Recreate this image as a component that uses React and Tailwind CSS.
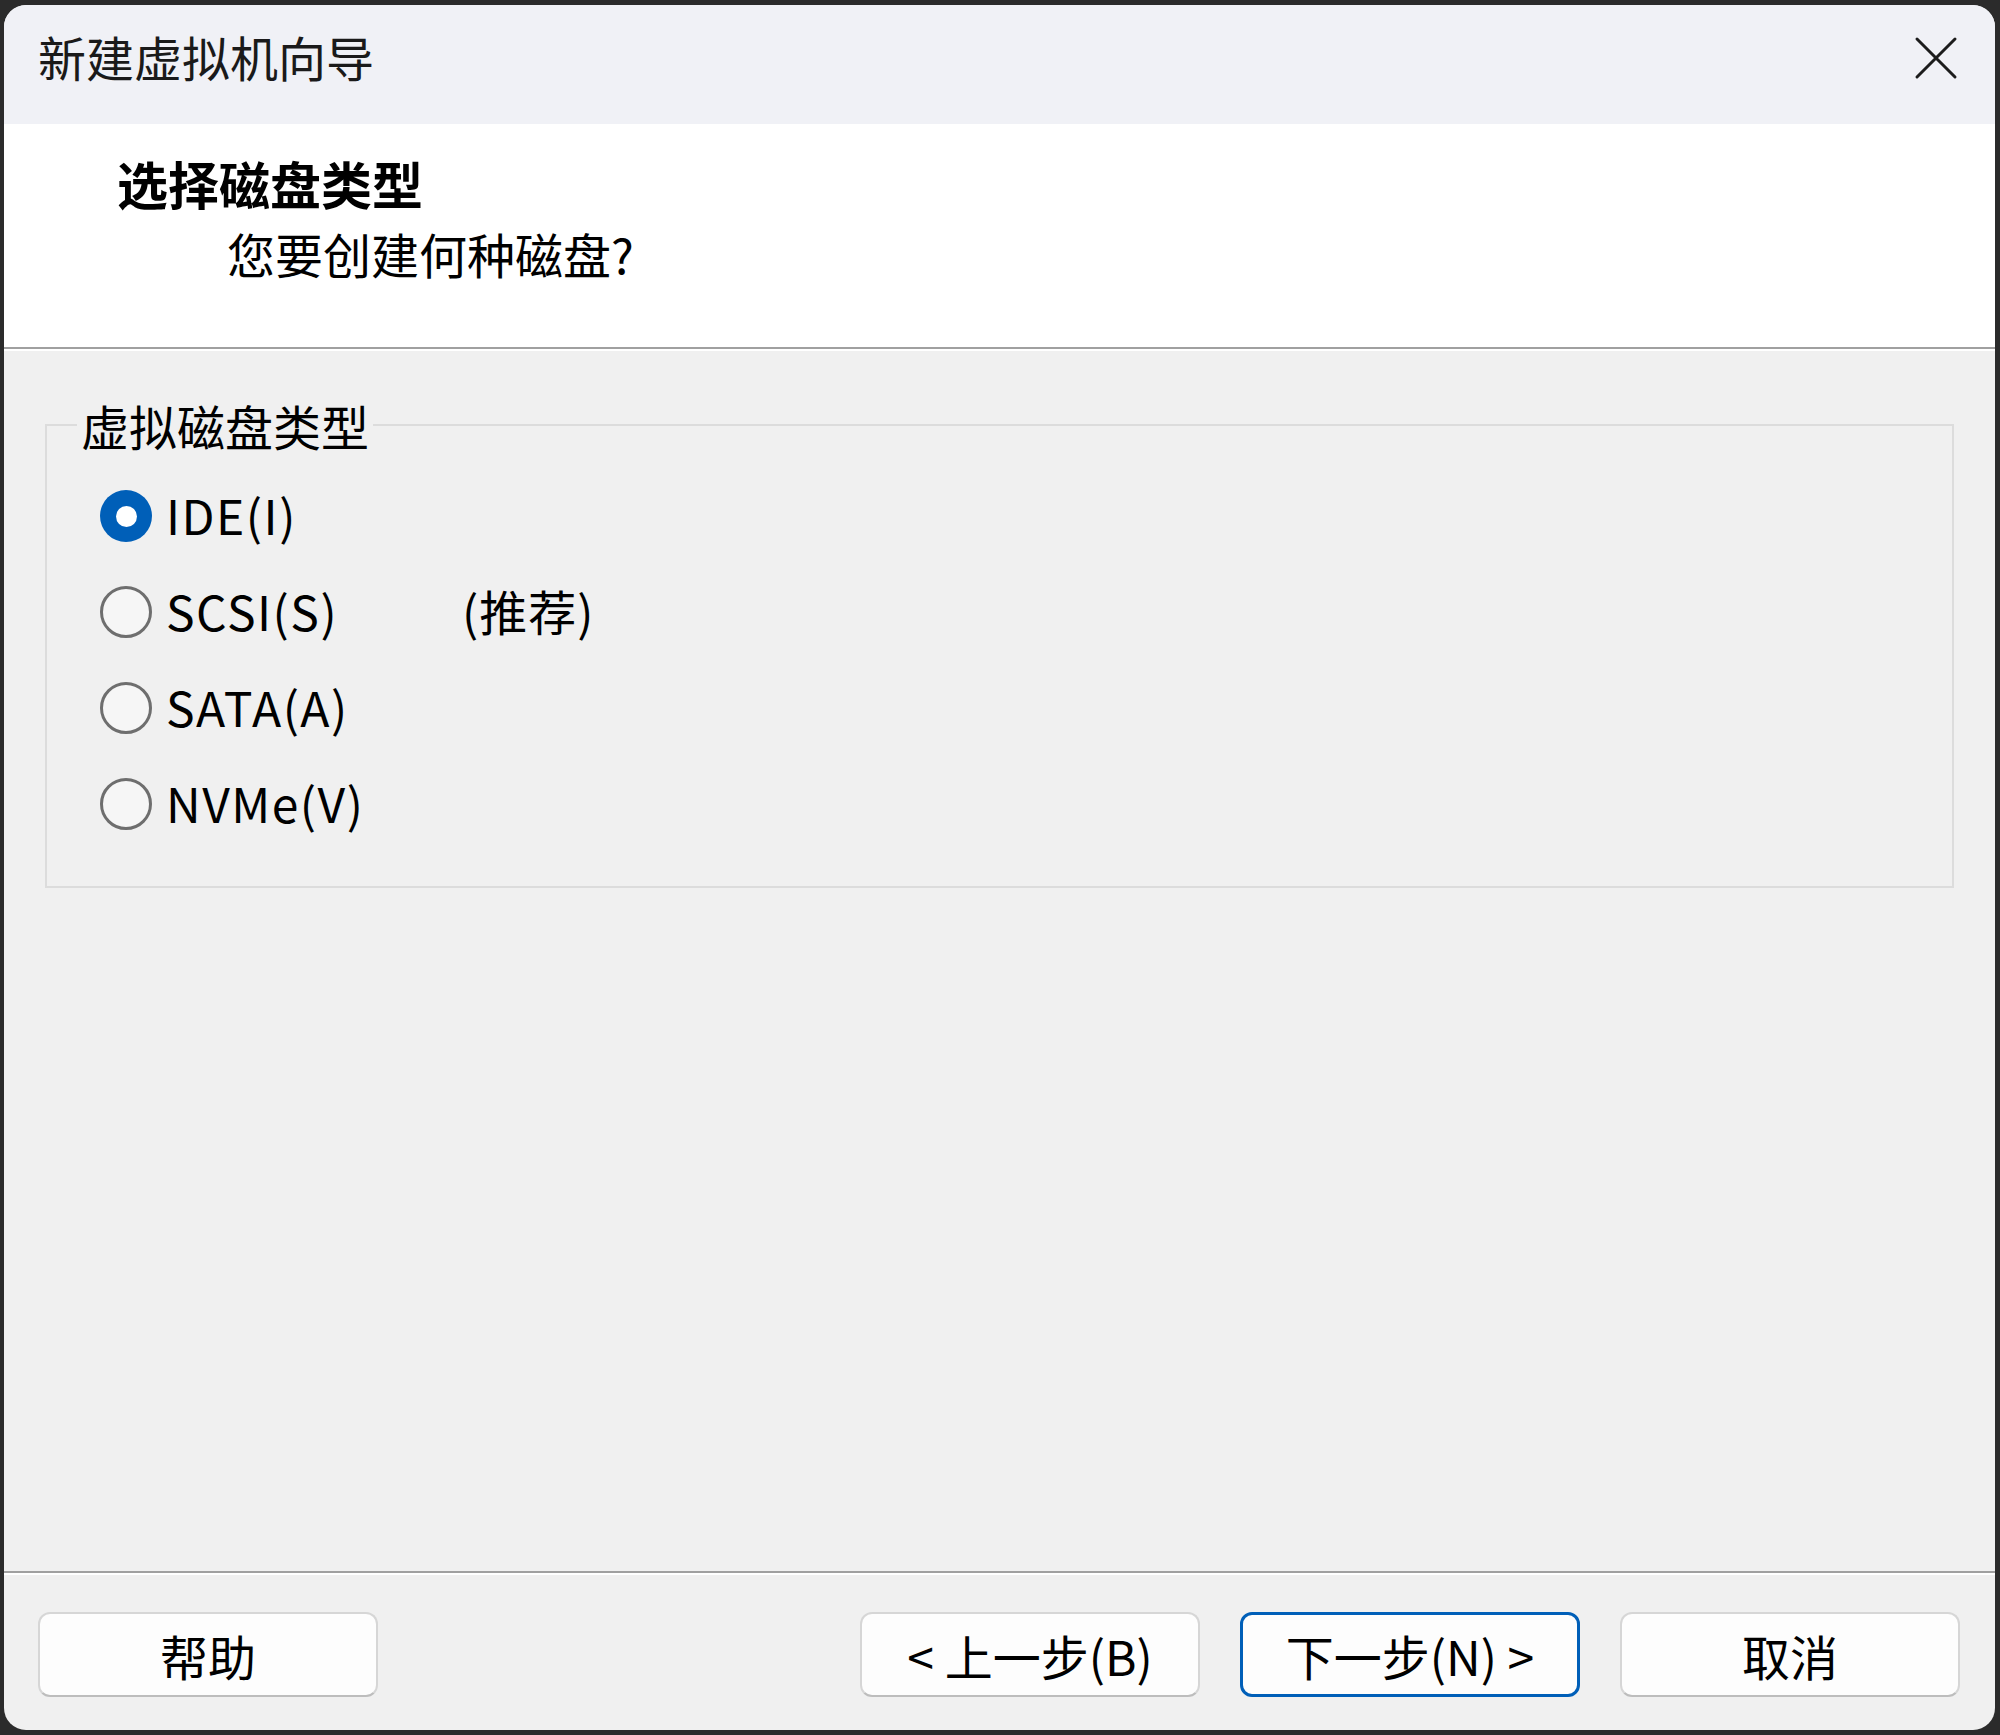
import React from "react";

const Radio = ({ checked, label, note }) => {
    return (
        <div className="h-[96px] flex items-center">
            {checked ? (
                <div className="w-[52px] h-[52px] rounded-full bg-[#005fb8] flex items-center justify-center shrink-0">
                    <div className="w-[21px] h-[21px] rounded-full bg-white" />
                </div>
            ) : (
                <div className="w-[52px] h-[52px] rounded-full border-[3px] border-[#6e6e6e] bg-[#f6f6f6] shrink-0" />
            )}
            <span className="ml-[14px] w-[296px] text-[48px] leading-[48px] tracking-[1.5px] text-black -mt-[4px]">
                {label}
            </span>
            {note && (
                <span className="text-[48px] leading-[48px] tracking-[1px] text-black -mt-[4px]">{note}</span>
            )}
        </div>
    );
};

const Button = ({ children, primary }) => {
    return (
        <button
            type="button"
            className={
                primary
                    ? "h-[85px] w-[340px] rounded-[12px] bg-[#fdfdfd] border-[3px] border-[#005fb8] text-[48px] leading-[48px] text-black flex items-center justify-center"
                    : "h-[85px] w-[340px] rounded-[12px] bg-[#fdfdfd] border-2 border-[#d6d6d6] border-b-[#bdbdbd] text-[48px] leading-[48px] text-black flex items-center justify-center"
            }
        >
            {children}
        </button>
    );
};

export default function App() {
    return (
        <div className="w-[2000px] h-[1735px] bg-[#2b2b2b] pt-[5px] pl-[4px] pr-[5px] pb-[5px] [font-family:'Noto_Sans_CJK_SC',sans-serif]">
            <div className="h-full rounded-[22px] overflow-hidden bg-[#f0f0f0] flex flex-col">
                {/* title bar */}
                <div className="h-[119px] shrink-0 bg-[#f0f1f6] flex items-center justify-between pl-[34px] pr-[37px] pb-[14px]">
                    <span className="text-[48px] leading-[48px] text-[#1a1a1a] -mt-[4px]">新建虚拟机向导</span>
                    <svg width="44" height="44" viewBox="0 0 44 44" fill="none">
                        <path d="M3 3 L41 41 M41 3 L3 41" stroke="#1c1c1c" strokeWidth="3" strokeLinecap="round" />
                    </svg>
                </div>

                {/* header */}
                <div className="h-[223px] shrink-0 bg-white pl-[113px] pt-[34px]">
                    <div className="text-[51px] leading-[51px] font-bold text-black">选择磁盘类型</div>
                    <div className="ml-[110px] mt-[20px] text-[48px] leading-[48px] text-black">
                        您要创建何种磁盘?
                    </div>
                </div>
                <div className="h-[2px] shrink-0 bg-[#a0a0a0]" />
                <div className="h-[2px] shrink-0 bg-white" />

                {/* content */}
                <div className="flex-1 px-[41px] pt-[50px]">
                    <fieldset className="h-[487px] border-2 border-[#dcdcdc]">
                        <legend className="ml-[30px] px-[4px] text-[48px] leading-[48px] text-black">
                            虚拟磁盘类型
                        </legend>
                        <div className="pl-[53px] pt-[19px]">
                            <Radio checked label="IDE(I)" />
                            <Radio label="SCSI(S)" note="(推荐)" />
                            <Radio label="SATA(A)" />
                            <Radio label="NVMe(V)" />
                        </div>
                    </fieldset>
                </div>

                <div className="h-[2px] shrink-0 bg-[#a0a0a0]" />
                <div className="h-[2px] shrink-0 bg-white" />

                {/* footer */}
                <div className="h-[155px] shrink-0 flex justify-between pl-[34px] pr-[35px] pt-[37px]">
                    <Button>帮助</Button>
                    <div className="flex gap-[40px]">
                        <Button>&lt; 上一步(B)</Button>
                        <Button primary>下一步(N) &gt;</Button>
                        <Button>取消</Button>
                    </div>
                </div>
            </div>
        </div>
    );
}
